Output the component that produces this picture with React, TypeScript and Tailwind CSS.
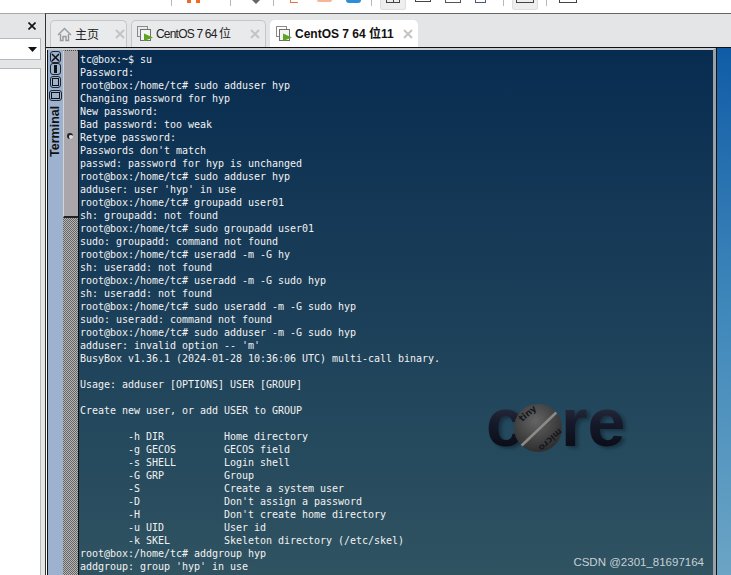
import React from 'react';

const LINES = [
  'tc@box:~$ su',
  'Password:',
  'root@box:/home/tc# sudo adduser hyp',
  'Changing password for hyp',
  'New password:',
  'Bad password: too weak',
  'Retype password:',
  "Passwords don't match",
  'passwd: password for hyp is unchanged',
  'root@box:/home/tc# sudo adduser hyp',
  "adduser: user 'hyp' in use",
  'root@box:/home/tc# groupadd user01',
  'sh: groupadd: not found',
  'root@box:/home/tc# sudo groupadd user01',
  'sudo: groupadd: command not found',
  'root@box:/home/tc# useradd -m -G hy',
  'sh: useradd: not found',
  'root@box:/home/tc# useradd -m -G sudo hyp',
  'sh: useradd: not found',
  'root@box:/home/tc# sudo useradd -m -G sudo hyp',
  'sudo: useradd: command not found',
  'root@box:/home/tc# sudo adduser -m -G sudo hyp',
  "adduser: invalid option -- 'm'",
  'BusyBox v1.36.1 (2024-01-28 10:36:06 UTC) multi-call binary.',
  '',
  'Usage: adduser [OPTIONS] USER [GROUP]',
  '',
  'Create new user, or add USER to GROUP',
  '',
  '        -h DIR          Home directory',
  '        -g GECOS        GECOS field',
  '        -s SHELL        Login shell',
  '        -G GRP          Group',
  '        -S              Create a system user',
  "        -D              Don't assign a password",
  "        -H              Don't create home directory",
  '        -u UID          User id',
  '        -k SKEL         Skeleton directory (/etc/skel)',
  'root@box:/home/tc# addgroup hyp',
  "addgroup: group 'hyp' in use",
  'root@box:/home/tc# ',
];

const VmIcon = () => (
  <svg width="18" height="16" viewBox="0 0 18 16" className="shrink-0">
    <rect x="0.5" y="0.5" width="10" height="10" fill="none" stroke="#8a8a8a" />
    <rect x="3.5" y="3.5" width="10" height="11" fill="#f4f4f4" stroke="#707070" />
    <path d="M7 7.5 L16 11.5 L7 15 Z" fill="#5ba51f" />
  </svg>
);

const CloseX = () => (
  <svg width="10" height="10" viewBox="0 0 10 10" className="shrink-0">
    <path d="M1 1 L9 9 M9 1 L1 9" stroke="#c4c4c4" strokeWidth="2" />
  </svg>
);

const btn = 'rounded-[3px] border border-[#1c2430] bg-[#9db2cf] flex items-center justify-center';

export default function App() {
  return (
    <div className="w-[731px] h-[575px] overflow-hidden bg-white flex flex-col font-['Liberation_Sans',sans-serif]">
      {/* clipped toolbar */}
      <div className="h-[13px] flex items-start shrink-0 overflow-hidden">
        <div className="w-px h-[6px] bg-[#b8b8b8] ml-[171px]" />
        <div className="w-[4px] h-[3px] bg-[#f26a21] ml-[15px]" />
        <div className="w-[4px] h-[3px] bg-[#f26a21] ml-[5px]" />
        <div className="w-px h-[6px] bg-[#b8b8b8] ml-[30px]" />
        <svg width="8" height="4" viewBox="0 0 8 4" className="ml-[21px]"><path d="M0 0 H8 L4 4 Z" fill="#666" /></svg>
        <div className="w-px h-[6px] bg-[#b8b8b8] ml-[13px]" />
        <div className="w-[8px] h-[3px] border-l border-b border-[#e8743b] ml-[16px]" />
        <div className="w-[15px] h-[2px] bg-[#f6b596] rounded-b ml-[19px]" />
        <div className="w-[15px] h-[3px] bg-[#2a8fd8] rounded-b ml-[14px]" />
        <div className="w-px h-[6px] bg-[#b8b8b8] ml-[10px]" />
        <div className="w-[26px] h-[10px] bg-[#eeeeee] border border-t-0 border-[#dedede] rounded-b-[3px] ml-[8px] flex justify-center">
          <div className="w-[14px] h-[3px] border border-t-0 border-[#444]"><div className="w-px h-[3px] bg-[#444] mx-auto" /></div>
        </div>
        <div className="w-[16px] h-[2px] border border-t-0 border-[#444] ml-[9px]" />
        <div className="w-[16px] h-[3px] border-b border-x border-[#555] ml-[14px]" />
        <div className="w-[11px] h-[3px] border-b border-x border-[#4a5a70] ml-[14px]" />
        <div className="w-px h-[6px] bg-[#b8b8b8] ml-[17px]" />
        <div className="w-[26px] h-[10px] bg-[#eeeeee] border border-t-0 border-[#dedede] rounded-b-[3px] ml-[8px] flex justify-center">
          <div className="w-[18px] h-[3px] border border-t-0 border-[#444]" />
        </div>
        <div className="w-px h-[6px] bg-[#b8b8b8] ml-[8px]" />
        <div className="w-[18px] h-[3px] border border-t-0 border-[#444] ml-[12px]" />
      </div>

      <div className="flex-1 flex min-h-0">
        {/* left dock */}
        <div className="w-[45px] shrink-0 bg-[#e4e5e6] border-t border-[#a8a8a8] flex flex-col">
          <div className="h-[24px] flex items-center justify-end pr-[9px]">
            <svg width="8" height="8" viewBox="0 0 8 8"><path d="M0.5 0.5 L7.5 7.5 M7.5 0.5 L0.5 7.5" stroke="#111" strokeWidth="1.6" /></svg>
          </div>
          <div className="h-[22px] w-[41px] bg-white border-y border-r border-[#b8b8b8] flex items-center justify-end pr-[3px]">
            <svg width="9" height="5" viewBox="0 0 9 5"><path d="M0 0 H9 L4.5 5 Z" fill="#111" /></svg>
          </div>
          <div className="h-[8px]" />
          <div className="flex-1 w-[41px] bg-white border-t border-r border-[#b8b8b8]" />
        </div>

        {/* main column */}
        <div className="flex-1 min-w-0 flex flex-col border-l border-t border-t-[#666] border-l-[#333]">
          <div className="h-[33px] shrink-0 bg-[#e4e5e6] flex items-end pl-[4px] gap-[4px]">
            <div className="w-[77px] h-[27px] bg-[#e9eaeb] border border-b-0 border-[#c6c6c6] rounded-t-[5px] flex items-center pl-[6px] text-[12px] text-[#222]">
              <svg width="15" height="15" viewBox="0 0 15 15" className="shrink-0">
                <path d="M1 8 L7.5 1.5 L14 8 M3.5 7 V13.5 H6 V9.5 H9 V13.5 H11.5 V7" fill="none" stroke="#9a9a9a" strokeWidth="1.4" />
              </svg>
              <span className="ml-[3px] w-[40px] font-['Noto_Sans_CJK_SC',sans-serif]">主页</span>
              <CloseX />
            </div>
            <div className="w-[135px] h-[27px] bg-[#e9eaeb] border border-b-0 border-[#c6c6c6] rounded-t-[5px] flex items-center pl-[5px] text-[12px] text-[#222]">
              <VmIcon />
              <span className="ml-[1px] w-[94px] whitespace-nowrap tracking-[-0.8px] font-['Liberation_Sans','Noto_Sans_CJK_SC',sans-serif]">CentOS 7 64 位</span>
              <CloseX />
            </div>
            <div className="w-[148px] h-[27px] bg-white rounded-t-[5px] flex items-center pl-[6px] text-[12px] font-bold text-[#111]">
              <VmIcon />
              <span className="ml-[1px] w-[108px] whitespace-nowrap font-['Liberation_Sans','Noto_Sans_CJK_SC',sans-serif]">CentOS 7 64 位11</span>
              <CloseX />
            </div>
          </div>

          {/* vm screen */}
          <div className="flex-1 min-h-0 flex border-t border-[#111] relative">
            <div className="w-[670px] shrink-0 flex bg-[#9db2cf] border-l border-t-2 border-r-[3px] border-t-[#c9ccd0] border-r-[#9aa0a4] border-l-white">
              <div className="w-[16px] shrink-0 bg-[#9db2cf] border-l border-[#111] flex flex-col items-center pt-[1px]">
                <div className={`w-[11px] h-[12px] ${btn}`}>
                  <svg width="9" height="9" viewBox="0 0 9 9"><path d="M1 1 L8 8 M8 1 L1 8" stroke="#111" strokeWidth="1.6" /></svg>
                </div>
                <div className={`w-[11px] h-[12px] mb-[1px] ${btn}`}><div className="w-[3px] h-[8px] bg-[#111]" /></div>
                <div className={`w-[11px] h-[12px] mb-[2px] ${btn}`}><div className="w-[7px] h-[8px] border border-[#111]" /></div>
                <div className={`w-[13px] h-[11px] ${btn}`}><div className="w-[9px] h-[7px] border border-[#111]" /></div>
                <div className="mt-[5px] h-[50px] flex items-center justify-center">
                  <span className="-rotate-90 text-[12.5px] font-bold text-[#111] whitespace-nowrap">Terminal</span>
                </div>
              </div>

              {/* scrollbar */}
              <div className="w-[15px] shrink-0 flex flex-col">
                <div className="h-[168px] shrink-0 bg-[#aba6a9] border-t border-l border-b-2 border-dotted border-t-[#444] border-l-[#d6d3d5] border-b-[#222] [border-left-style:solid] [border-bottom-style:solid] relative">
                  <div className="absolute left-[3px] top-[82px] w-[6px] h-[6px] rounded-full border-l-2 border-t-2 border-[#222] bg-[#ddd]" />
                </div>
                <div className="flex-1 bg-[repeating-conic-gradient(#666_0_25%,#b4b4b4_0_50%)] bg-[length:2px_2px]" />
              </div>
              <div className="w-px shrink-0 bg-[#111]" />

              <div className="flex-1 min-w-0 relative overflow-hidden bg-gradient-to-b from-[#082c50] to-[#2f5361] pt-[3px] pl-[1px]">
                <pre className="font-['DejaVu_Sans_Mono',monospace] text-[10px] leading-[13px] tracking-[-0.02px] text-[#f2f2f2]">
                  {LINES.join('\n')}
                </pre>
                {/* wallpaper logo */}
                <svg width="150" height="58" viewBox="0 0 150 58" className="absolute left-[407px] top-[351px]">
                  <defs>
                    <linearGradient id="letters" x1="0" y1="0" x2="0" y2="1">
                      <stop offset="0" stopColor="#3d4256" />
                      <stop offset="0.5" stopColor="#161a2a" />
                      <stop offset="1" stopColor="#05060f" />
                    </linearGradient>
                    <radialGradient id="ball" cx="0.45" cy="0.35" r="0.7">
                      <stop offset="0" stopColor="#646464" />
                      <stop offset="1" stopColor="#2a2a2a" />
                    </radialGradient>
                    <filter id="soft"><feGaussianBlur stdDeviation="1.6" /></filter>
                    <clipPath id="ballClip"><circle cx="52" cy="27" r="24" /></clipPath>
                  </defs>
                  <g fontFamily="'Liberation Sans',sans-serif" fontWeight="bold" fontSize="68">
                    <text x="3" y="47" fill="#0a1a28" opacity="0.5" filter="url(#soft)">c</text>
                    <text x="78" y="47" fill="#0a1a28" opacity="0.5" filter="url(#soft)">re</text>
                    <text x="0" y="45" fill="url(#letters)">c</text>
                    <text x="75" y="45" fill="url(#letters)">re</text>
                  </g>
                  <circle cx="52" cy="27" r="24" fill="url(#ball)" />
                  <path d="M32 48 L74 8" stroke="#8a8a86" strokeWidth="2.5" clipPath="url(#ballClip)" />
                  <g fontFamily="'DejaVu Sans',sans-serif" fontWeight="bold" fontSize="9" fill="#15181f">
                    <text transform="translate(36 21) rotate(-40)">tiny</text>
                    <text transform="translate(73 27) rotate(138)">micro</text>
                  </g>
                </svg>
              </div>
            </div>
            <div className="flex-1 bg-gradient-to-b from-[#0f5ca6] via-[#3f88bb] to-[#6ba4c4] border-l border-[#111]" />
            {/* csdn watermark */}
            <span className="absolute right-[27px] bottom-[4px] text-[11.5px] text-[#c6d0d6] whitespace-nowrap font-['Liberation_Sans',sans-serif]">CSDN @2301_81697164</span>
          </div>
        </div>
      </div>
    </div>
  );
}
